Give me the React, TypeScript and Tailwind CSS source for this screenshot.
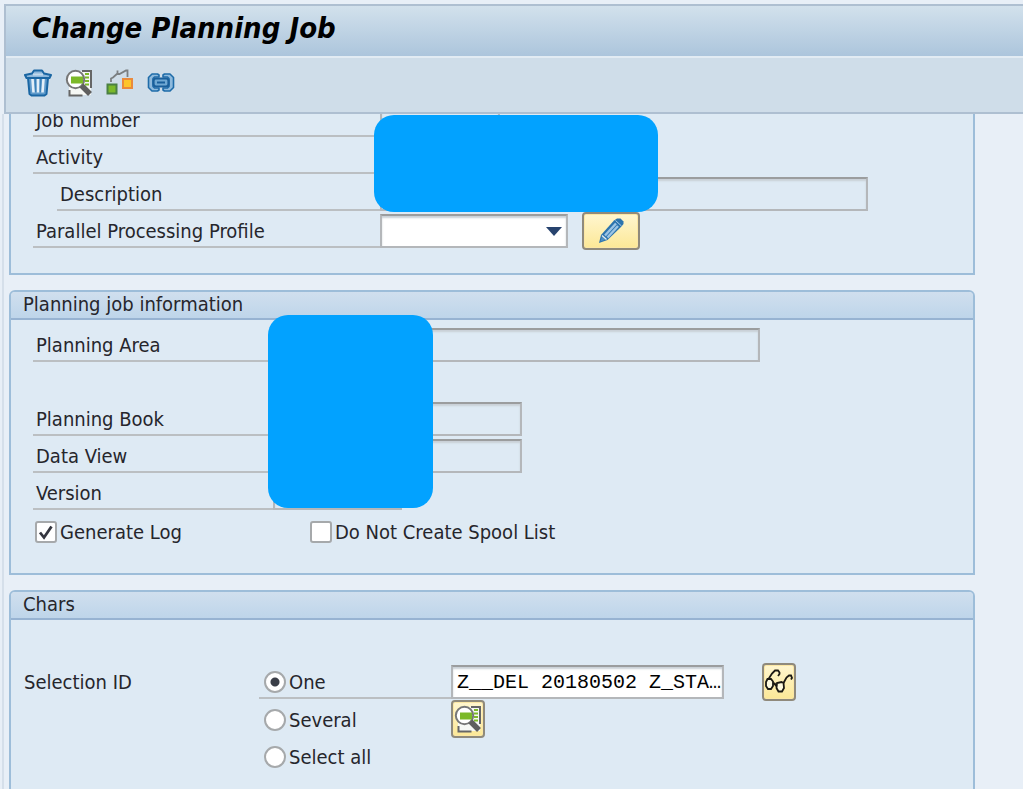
import type { ButtonHTMLAttributes, ReactNode } from "react";

function TrashIcon() {
  return (
    <svg viewBox="0 0 28 28" className="size-7">
      <path d="M4 9h20l-1.500 16-2 1.500h-13l-2-1.500z" fill="#5f9acb" stroke="#1a66a3" strokeWidth="2" strokeLinejoin="round" />
      <path d="M8.500 10l1 13.500M14 10v13.500M19.500 10l-1 13.500" stroke="#e4eff8" strokeWidth="2.600" />
      <path d="M11.300 10l.4 13M16.700 10l-.4 13" stroke="#3c81b8" strokeWidth="1.300" />
      <path d="M1 6L8 4.500l2-3h8l2 3L27 6l-1.500 3h-23z" fill="#8db8dc" stroke="#1a66a3" strokeWidth="2" strokeLinejoin="round" />
      <path d="M9 5.500h10" stroke="#c1d9ec" strokeWidth="2" />
    </svg>
  );
}

function PreviewIcon() {
  return (
    <svg viewBox="0 0 28 28" className="size-7">
      <path d="M11 2h15v24H4V15" fill="#f6f8f5" />
      <path d="M17 2h9v17M4.500 21v5.500h13" fill="none" stroke="#666" strokeWidth="2" />
      <path d="M20 5h4M20 8.500h4M20 12h4M20 15.500h4" stroke="#7db928" strokeWidth="2" />
      <circle cx="10.500" cy="10.500" r="8.700" fill="#fff" stroke="#777" strokeWidth="2" />
      <path d="M6 7.500h12v7H6z" fill="#7cb928" />
      <path d="M16.500 16.500l8.500 8.500" stroke="#5f5f5f" strokeWidth="5.500" />
    </svg>
  );
}

function StepsIcon() {
  return (
    <svg viewBox="0 0 28 28" className="size-7">
      <path d="M5 13V9.500L7 8.500l5-4.500M11.500 1.500V5h2l6.500-3.500h1.500V8" fill="none" stroke="#7b7f82" strokeWidth="1.800" />
      <path d="M1.500 15.500h9v9h-9z" fill="#7bb92a" stroke="#4b8043" strokeWidth="2" />
      <path d="M17 10h9v9h-9z" fill="#fdc52b" stroke="#ea8a3c" strokeWidth="2" />
    </svg>
  );
}

function LinkIcon() {
  return (
    <svg viewBox="0 0 28 28" className="size-7">
      <path
        d="M12 8V6l-1.500-1H5L1.500 8.500v10L5 22h5.500l1.500-1v-2H7.500L6 17.500v-8L7.500 8zM16 8V6l1.500-1H23l3.500 3.500v10L23 22h-5.500L16 21v-2h4.500l1.500-1.500v-8L20.500 8z"
        fill="#8fbadd"
        stroke="#1f6ca9"
        strokeWidth="1.600"
        strokeLinejoin="round"
      />
      <rect x="6.500" y="9.500" width="15" height="8" rx="2.500" fill="#6fa8d3" stroke="#1a5f9b" strokeWidth="2.200" />
      <path d="M10 13.500h8" stroke="#1a5f9b" strokeWidth="2" />
    </svg>
  );
}

function PencilIcon() {
  return (
    <svg viewBox="0 0 28 28" className="size-7">
      <path d="M2 26l2-8L17 3.500 20 1.500h3.500l3 3V7L24 10 10.500 23z" fill="#2c74ae" />
      <path d="M8 18.500L19 6.500M10.500 20.500L21 9" stroke="#9cc4e4" strokeWidth="2.400" />
      <path d="M3.500 24.500l1.500-5 3.500 3z" fill="#4d8fc2" />
      <path d="M5 18.500l4.500 4" stroke="#e6eef0" strokeWidth="1.300" />
      <path d="M18.500 3.500l6 5.500" stroke="#a9cbe4" strokeWidth="1" />
    </svg>
  );
}

function GlassesIcon() {
  return (
    <svg viewBox="0 0 28 28" className="size-7 shrink-0" fill="none" stroke="#1c1a14">
      <path d="M2.500 11L1 14v4l2 3h3l2-3v-4.500L6 11z" fill="#fffbe0" strokeWidth="1.800" />
      <path d="M12 15l-.5 5 2 3.500H17l2-3.500-.5-5-2-1z" fill="#fffbe0" strokeWidth="1.800" />
      <path d="M8 15.500h1.500L11.500 18" strokeWidth="2.200" />
      <path d="M3.500 11L7 5.500 10 2.500h3l1.500 2V6L13 8M18.500 15l3-5.500L24 7.500h2l1 2.500-1 1.500" strokeWidth="1.800" />
    </svg>
  );
}

function ToolButton({ label, children }: { label: string; children: ReactNode }) {
  return (
    <button type="button" aria-label={label} className="shrink-0">
      {children}
    </button>
  );
}

function GoldButton({ className = "", ...rest }: ButtonHTMLAttributes<HTMLButtonElement>) {
  return (
    <button
      type="button"
      className={`flex h-[38px] shrink-0 items-center justify-center rounded border-2 border-[#8f8a7c] bg-linear-to-b from-[#fff6cf] to-[#fce896] shadow-[inset_0_0_0_1px_#fbe7a4] ${className}`}
      {...rest}
    />
  );
}

const fieldStyle =
  "h-[34px] min-w-0 border-2 border-[#b4b7ba] border-t-[#9b9d9e] shadow-[inset_0_2px_2px_#c9d0d6] outline-none";

function Row({ children }: { children?: ReactNode }) {
  return <div className="flex h-[37px] items-end">{children}</div>;
}

function RowLabel({ htmlFor, className, children }: { htmlFor: string; className: string; children: ReactNode }) {
  return (
    <label htmlFor={htmlFor} className={`flex h-full shrink-0 items-center border-b-2 border-[#bbbfc2] pt-1 ${className}`}>
      {children}
    </label>
  );
}

function Group({ title, className = "", children }: { title: string; className?: string; children: ReactNode }) {
  return (
    <section className={`relative shrink-0 rounded-t-md border-2 border-[#9dbdd9] bg-[#deeaf4] ${className}`}>
      <h2 className="flex h-7 items-center rounded-t border-b-2 border-[#97b3d2] bg-linear-to-b from-[#d0dfee] to-[#bed5ea] pb-0.5 pl-3">
        {title}
      </h2>
      {children}
    </section>
  );
}

function Check({ id, label, checked = false }: { id: string; label: string; checked?: boolean }) {
  return (
    <span className="flex items-center gap-[3px]">
      <span className="grid">
        <input
          id={id}
          type="checkbox"
          defaultChecked={checked}
          className="peer col-start-1 row-start-1 size-[22px] appearance-none rounded-[3px] border-2 border-[#a6a9ab] bg-white"
        />
        <svg
          viewBox="0 0 22 22"
          className="pointer-events-none invisible col-start-1 row-start-1 size-[22px] peer-checked:visible"
        >
          <path d="M5 11.500l4 5L16.500 5.500" fill="none" stroke="#34363f" strokeWidth="2.800" />
        </svg>
      </span>
      <label htmlFor={id}>{label}</label>
    </span>
  );
}

function Choice({ id, label, checked = false }: { id: string; label: string; checked?: boolean }) {
  return (
    <span className="flex items-center gap-[3px]">
      <input
        id={id}
        name="selection"
        type="radio"
        defaultChecked={checked}
        className="size-[22px] appearance-none rounded-full border-2 border-[#a6a9ab] bg-white checked:bg-[radial-gradient(circle,#3a3e48_4px,#ffffff_5px)]"
      />
      <label htmlFor={id}>{label}</label>
    </span>
  );
}

export default function App() {
  return (
    <div className="h-screen bg-white pr-0.5 pb-0.5">
      <div className="flex h-full flex-col overflow-hidden bg-[#e8eff7] pt-1 font-['DejaVu_Sans_Condensed','DejaVu_Sans',sans-serif] text-[20px] leading-6 text-[#26262c] [font-stretch:condensed]">
        <header className="ml-1 shrink-0 border-y-2 border-l-2 border-[#aebfd1] bg-[#cfdde9]">
          <h1 className="flex h-[52px] items-center border-b-2 border-[#e2ebf3] bg-linear-to-b from-[#d2e1ec] to-[#acc5dc] pb-1.5 pl-[26px] text-[29px] font-bold text-black italic">
            Change Planning Job
          </h1>
          <nav className="flex h-[54px] items-center gap-[13px] pb-1 pl-[18px]" aria-label="Job tools">
            <ToolButton label="Delete"><TrashIcon /></ToolButton>
            <ToolButton label="Preview"><PreviewIcon /></ToolButton>
            <ToolButton label="Steps"><StepsIcon /></ToolButton>
            <ToolButton label="Link"><LinkIcon /></ToolButton>
          </nav>
        </header>

        <main className="ml-0.5 flex min-h-0 flex-1 flex-col gap-[15px] overflow-hidden border-l-2 border-[#d5dfea] pr-12 pl-[5px]">
          <section className="relative -mt-3.5 shrink-0 border-2 border-t-0 border-[#9dbdd9] bg-[#deeaf4] pb-[25px] pl-[22px]">
            <Row>
              <RowLabel htmlFor="job" className="w-[347px] pl-[3px]">Job number</RowLabel>
              <input id="job" readOnly className={`${fieldStyle} w-[120px]`} />
            </Row>
            <Row>
              <RowLabel htmlFor="activity" className="w-[347px] pl-[3px]">Activity</RowLabel>
              <input id="activity" readOnly className={`${fieldStyle} w-[200px]`} />
            </Row>
            <Row>
              <RowLabel htmlFor="description" className="ml-6 w-[323px] pl-[3px]">Description</RowLabel>
              <input id="description" readOnly className={`${fieldStyle} w-[488px]`} />
            </Row>
            <Row>
              <RowLabel htmlFor="profile" className="w-[347px] pl-[3px]">Parallel Processing Profile</RowLabel>
              <span className="grid items-center">
                <select id="profile" className={`${fieldStyle} col-start-1 row-start-1 w-[188px] appearance-none bg-white`}>
                  <option></option>
                </select>
                <svg viewBox="0 0 16 9" className="pointer-events-none col-start-1 row-start-1 mr-1.5 h-[9px] w-4 justify-self-end">
                  <path d="M0 0h16L8 9z" fill="#27436e" />
                </svg>
              </span>
              <span className="-my-0.5 ml-3.5">
                <GoldButton className="w-[58px]" aria-label="Edit profile"><PencilIcon /></GoldButton>
              </span>
            </Row>
            <div className="absolute top-[15px] left-[363px] h-[97px] w-[284px] rounded-[20px] bg-[#02a2ff]" />
          </section>

          <Group title="Planning job information">
            <div className="pt-[5px] pb-[27px] pl-[22px]">
              <Row>
                <RowLabel htmlFor="area" className="w-60 pl-[3px]">Planning Area</RowLabel>
                <input id="area" readOnly className={`${fieldStyle} w-[487px]`} />
              </Row>
              <Row />
              <Row>
                <RowLabel htmlFor="book" className="w-60 pl-[3px]">Planning Book</RowLabel>
                <input id="book" readOnly className={`${fieldStyle} w-[249px]`} />
              </Row>
              <Row>
                <RowLabel htmlFor="view" className="w-60 pl-[3px]">Data View</RowLabel>
                <input id="view" readOnly className={`${fieldStyle} w-[249px]`} />
              </Row>
              <Row>
                <RowLabel htmlFor="version" className="w-60 pl-[3px]">Version</RowLabel>
                <input id="version" readOnly className={`${fieldStyle} w-[129px]`} />
              </Row>
              <div className="flex h-9 items-center pt-[7px] pl-0.5">
                <span className="w-[275px]"><Check id="log" label="Generate Log" checked /></span>
                <Check id="spool" label="Do Not Create Spool List" />
              </div>
            </div>
            <div className="absolute top-[23px] left-[257px] h-[193px] w-[165px] rounded-[20px] bg-[#02a2ff]" />
          </Group>

          <Group title="Chars" className="min-h-80">
            <div role="group" aria-label="Selection ID" className="flex pt-[42px] pl-3">
              <span className="flex h-[37px] w-[236px] shrink-0 items-center pt-0.5 pl-px">Selection ID</span>
              <div>
                <Row>
                  <span className="flex h-full w-48 items-center border-b-2 border-[#bbbfc2] pt-1 pl-[5px]">
                    <Choice id="one" label="One" checked />
                  </span>
                  <input
                    aria-label="Selection"
                    defaultValue="Z__DEL 20180502 Z_STA…"
                    className={`${fieldStyle} w-[273px] bg-white pl-1 font-['Liberation_Mono',monospace] text-[20px] text-black`}
                  />
                  <span className="-my-0.5 ml-[38px]">
                    <GoldButton className="w-[34px]" aria-label="Display selection"><GlassesIcon /></GoldButton>
                  </span>
                </Row>
                <Row>
                  <span className="flex h-full w-48 items-center pt-1 pl-[5px]">
                    <Choice id="several" label="Several" />
                  </span>
                  <span className="-my-0.5">
                    <GoldButton className="w-[34px]" aria-label="Multiple selection"><PreviewIcon /></GoldButton>
                  </span>
                </Row>
                <Row>
                  <span className="flex h-full items-center pt-1 pl-[5px]">
                    <Choice id="all" label="Select all" />
                  </span>
                </Row>
              </div>
            </div>
          </Group>
        </main>
      </div>
    </div>
  );
}
